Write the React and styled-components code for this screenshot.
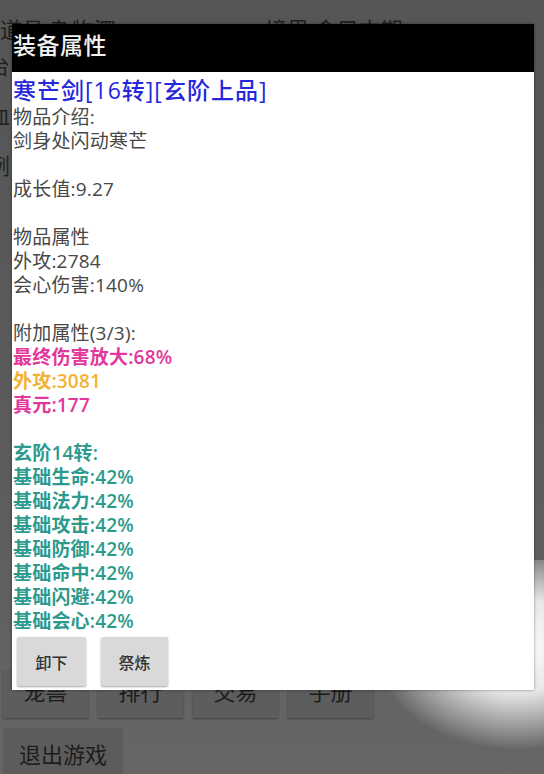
import React from 'react'
import styled, { createGlobalStyle } from 'styled-components'

const GlobalStyle = createGlobalStyle`
  html, body {
    margin: 0;
    padding: 0;
    background: #5a5a5a;
  }
  body {
    font-family: "Open Sans", "Noto Sans CJK SC", sans-serif;
  }
`

const Screen = styled.div`
  position: relative;
  width: 544px;
  height: 774px;
  overflow: hidden;
  background: linear-gradient(#555555, #5c5c5c 60%, #666666);
  display: flex;
  flex-direction: column;
`

const TopBar = styled.div`
  display: flex;
  padding: 12px 0 0 0;
  font-size: 22px;
  color: #1f1f1f;
  height: 40px;
  box-sizing: border-box;
`

const TopItem = styled.div`
  width: ${(p) => p.$w}px;
  white-space: nowrap;
`

const SideList = styled.div`
  display: flex;
  flex-direction: column;
  gap: 18px;
  margin-left: -12px;
  font-size: 22px;
  color: #222;
  padding-top: 8px;
`

const Spacer = styled.div`
  flex: 1;
`

const MenuRow = styled.div`
  display: flex;
  gap: 10px;
  padding: 0 0 0 3px;
`

const MenuButton = styled.div`
  width: 85px;
  height: 48px;
  background: #5d5d5d;
  box-shadow: 0 1px 2px rgba(0, 0, 0, 0.35);
  display: flex;
  align-items: flex-end;
  justify-content: center;
  padding-bottom: 12px;
  box-sizing: border-box;
  font-size: 22px;
  color: #1c1c1c;
`

const ExitButton = styled(MenuButton)`
  width: 120px;
  height: 46px;
  margin: 10px 0 0 3px;
  align-items: center;
  padding: 4px 0 0 0;
  background: #5c5c5c;
  box-shadow: none;
`

const Glare = styled.div`
  position: absolute;
  right: 0;
  top: 560px;
  width: 180px;
  height: 190px;
  background: radial-gradient(ellipse 80% 55% at 85% 45%, rgba(255, 255, 255, 0.98) 0%, rgba(255, 255, 255, 0.85) 45%, rgba(255, 255, 255, 0) 100%);
  pointer-events: none;
`

const Dialog = styled.div`
  position: absolute;
  left: 12px;
  top: 24px;
  width: 522px;
  display: flex;
  flex-direction: column;
  box-shadow: 0 0 3px rgba(0, 0, 0, 0.4);
`

const Header = styled.div`
  height: 48px;
  background: #000;
  color: #f2f2f2;
  font-size: 23px;
  font-weight: 500;
  padding: 3px 0 0 1px;
  box-sizing: border-box;
  letter-spacing: 0.5px;
`

const Body = styled.div`
  background: #fff;
  padding: 3px 0 4px 1px;
  display: flex;
  flex-direction: column;
`

const ItemName = styled.div`
  font-size: 23px;
  line-height: 30px;
  color: #2626dc;
  font-weight: 500;
  letter-spacing: 1px;
`

const Line = styled.div`
  font-size: 19px;
  line-height: 24px;
  height: 24px;
  color: ${(p) => p.$color || '#474747'};
  font-weight: ${(p) => (p.$bold ? 600 : 400)};
  letter-spacing: 0.2px;
  white-space: nowrap;
`

const Actions = styled.div`
  display: flex;
  gap: 15px;
  padding: 4px 0 0 4px;
`

const ActionButton = styled.div`
  width: ${(p) => p.$w}px;
  height: 49px;
  background: #d9d9d9;
  border-radius: 2px;
  box-shadow: 0 1px 2px rgba(0, 0, 0, 0.35);
  display: flex;
  align-items: center;
  justify-content: center;
  font-size: 16px;
  font-weight: 500;
  color: #333;
`

const PINK = '#e2379b'
const GOLD = '#f3b232'
const TEAL = '#2c9a8c'

const lines = [
  { t: '物品介绍:' },
  { t: '剑身处闪动寒芒' },
  { t: '' },
  { t: '成长值:9.27' },
  { t: '' },
  { t: '物品属性' },
  { t: '外攻:2784' },
  { t: '会心伤害:140%' },
  { t: '' },
  { t: '附加属性(3/3):' },
  { t: '最终伤害放大:68%', c: PINK },
  { t: '外攻:3081', c: GOLD },
  { t: '真元:177', c: PINK },
  { t: '' },
  { t: '玄阶14转:', c: TEAL },
  { t: '基础生命:42%', c: TEAL },
  { t: '基础法力:42%', c: TEAL },
  { t: '基础攻击:42%', c: TEAL },
  { t: '基础防御:42%', c: TEAL },
  { t: '基础命中:42%', c: TEAL },
  { t: '基础闪避:42%', c: TEAL },
  { t: '基础会心:42%', c: TEAL },
]

export default function App() {
  return (
    <>
      <GlobalStyle />
      <Screen>
        <TopBar>
          <TopItem $w={265}>道具 杂物泗</TopItem>
          <TopItem $w={200}>境界 金目中期</TopItem>
        </TopBar>
        <SideList>
          <div>台</div>
          <div>血</div>
          <div>例</div>
        </SideList>
        <Spacer />
        <MenuRow>
          <MenuButton>宠兽</MenuButton>
          <MenuButton>排行</MenuButton>
          <MenuButton>交易</MenuButton>
          <MenuButton>手册</MenuButton>
        </MenuRow>
        <ExitButton>退出游戏</ExitButton>

        <Glare />

        <Dialog>
          <Header>装备属性</Header>
          <Body>
            <ItemName>寒芒剑[16转][玄阶上品]</ItemName>
            {lines.map((l, i) => (
              <Line key={i} $color={l.c} $bold={!!l.c}>
                {l.t}
              </Line>
            ))}
            <Actions>
              <ActionButton $w={69}>卸下</ActionButton>
              <ActionButton $w={67}>祭炼</ActionButton>
            </Actions>
          </Body>
        </Dialog>
      </Screen>
    </>
  )
}
